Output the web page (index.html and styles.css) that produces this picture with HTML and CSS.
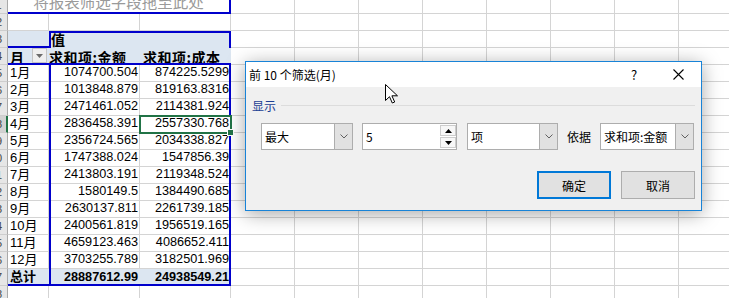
FILE: index.html
```html
<!DOCTYPE html>
<html lang="zh-CN">
<head>
  <meta charset="UTF-8" />
  <title>前 10 个筛选</title>
  <link rel="stylesheet" href="styles.css">
</head>
<body>
  <!-- ===== SHEET ===== -->
  <div class="sheet">
    <div class="row-heads">
      <div class="rh"><span>11</span></div>
      <div class="rh"><span>12</span></div>
      <div class="rh"><span>13</span></div>
      <div class="rh"><span>14</span></div>
      <div class="rh"><span>15</span></div>
      <div class="rh"><span>16</span></div>
      <div class="rh"><span>17</span></div>
      <div class="rh sel"><span>18</span></div>
      <div class="rh"><span>19</span></div>
      <div class="rh"><span>20</span></div>
      <div class="rh"><span>21</span></div>
      <div class="rh"><span>22</span></div>
      <div class="rh"><span>23</span></div>
      <div class="rh"><span>24</span></div>
      <div class="rh"><span>25</span></div>
      <div class="rh"><span>26</span></div>
      <div class="rh"><span>27</span></div>
      <div class="rh"><span>28</span></div>
    </div>

    <div class="pivot">
      <div class="pv-filter">将报表筛选字段拖至此处</div>
      <div class="pv-gap"></div>

      <div class="pv-corner"></div>
      <div class="pv-values">值</div>

      <div class="pv-rowfield"><span class="field-name">月</span><span class="filter-btn"><svg width="7" height="4" viewBox="0 0 7 4"><path d="M0 0h7L3.5 4z" fill="#6b6b6b"/></svg></span></div>
      <div class="pv-colhead b">求和项:金额</div>
      <div class="pv-colhead c">求和项:成本</div>

      <div class="lbl">1月</div><div class="num b">1074700.504</div><div class="num c">874225.5299</div>
      <div class="lbl">2月</div><div class="num b">1013848.879</div><div class="num c">819163.8316</div>
      <div class="lbl">3月</div><div class="num b">2471461.052</div><div class="num c">2114381.924</div>
      <div class="lbl">4月</div><div class="num b">2836458.391</div><div class="num c sel">2557330.768</div>
      <div class="lbl">5月</div><div class="num b">2356724.565</div><div class="num c">2034338.827</div>
      <div class="lbl">6月</div><div class="num b">1747388.024</div><div class="num c">1547856.39</div>
      <div class="lbl">7月</div><div class="num b">2413803.191</div><div class="num c">2119348.524</div>
      <div class="lbl">8月</div><div class="num b">1580149.5</div><div class="num c">1384490.685</div>
      <div class="lbl">9月</div><div class="num b">2630137.811</div><div class="num c">2261739.185</div>
      <div class="lbl">10月</div><div class="num b">2400561.819</div><div class="num c">1956519.165</div>
      <div class="lbl">11月</div><div class="num b">4659123.463</div><div class="num c">4086652.411</div>
      <div class="lbl">12月</div><div class="num b">3703255.789</div><div class="num c">3182501.969</div>
      <div class="lbl total">总计</div><div class="num b total">28887612.99</div><div class="num c total">24938549.21</div>
    </div>

    <div class="rest"></div>
  </div>

  <!-- ===== TOP 10 FILTER DIALOG ===== -->
  <div class="dialog">
    <div class="dlg-title">
      <span class="caption">前 10 个筛选(月)</span>
      <span class="help">?</span>
      <span class="close">
        <svg width="11" height="11" viewBox="0 0 11 11"><path d="M0.5 0.5l10 10M10.5 0.5l-10 10" stroke="#000" stroke-width="1.1"/></svg>
      </span>
    </div>

    <div class="dlg-body">
      <div class="group-head"><span>显示</span><i class="rule"></i></div>

      <div class="controls">
        <div class="combo mode">
          <span class="value">最大</span>
          <span class="drop"><svg width="8" height="5" viewBox="0 0 8 5"><path d="M0.5 0.5l3.5 3.5 3.5-3.5" fill="none" stroke="#606060"/></svg></span>
        </div>
        <div class="spin">
          <span class="value">5</span>
          <span class="spin-btns">
            <b><svg width="7" height="4" viewBox="0 0 7 4"><path d="M0 4h7L3.5 0z"/></svg></b>
            <b><svg width="7" height="4" viewBox="0 0 7 4"><path d="M0 0h7L3.5 4z"/></svg></b>
          </span>
        </div>
        <div class="combo unit">
          <span class="value">项</span>
          <span class="drop"><svg width="8" height="5" viewBox="0 0 8 5"><path d="M0.5 0.5l3.5 3.5 3.5-3.5" fill="none" stroke="#606060"/></svg></span>
        </div>
        <span class="by">依据</span>
        <div class="combo field">
          <span class="value">求和项:金额</span>
          <span class="drop"><svg width="8" height="5" viewBox="0 0 8 5"><path d="M0.5 0.5l3.5 3.5 3.5-3.5" fill="none" stroke="#606060"/></svg></span>
        </div>
      </div>

      <div class="actions">
        <button class="btn primary">确定</button>
        <button class="btn">取消</button>
      </div>
    </div>
  </div>

  <!-- mouse pointer over the dialog -->
  <svg class="cursor" width="13" height="20" viewBox="0 0 13 20">
    <path d="M0.5 0.5v16l4-3.8 2.8 6.3 2.4-1-2.8-6.2h5.6z" fill="#fff" stroke="#000" stroke-width="1"/>
  </svg>
</body>
</html>
```

FILE: styles.css
```css
/* === PALETTE === */
:root {
  --grid: #d4d4d4;
  --pivot-blue: #0000cc;
  --pivot-fill: #dce6f1;
  --select: #217346;
  --dlg-bg: #f0f0f0;
  --ctl-border: #adadad;
}

/* 1) Base */
body {
  margin: 0;
  background: #fff;
  color: #000;
  font-family: "Liberation Sans", "Noto Sans CJK SC", sans-serif;
  overflow: hidden;
}

/* 2) Sheet: row headers + pivot columns A-C + the rest */
.sheet {
  display: flex;
  margin-top: -3px;      /* first row is cut off at the top */
  height: 310px;
}

.row-heads {
  width: 8px;
  flex: none;
}
.rh {
  height: 17px;
  box-sizing: border-box;
  background: #e6e6e6;
  border-right: 1px solid #a9a9a9;
  border-bottom: 1px solid #cdcdcd;
  overflow: hidden;
  font-size: 11px;
  line-height: 16px;
  color: #444;
}
.rh span {
  display: block;
  width: 28px;
  margin-left: -18px;
  text-align: center;
}
.rh.sel {
  background: #d2d2d2;
  border-right: 2px solid var(--select);
}

.pivot {
  width: 223px;
  flex: none;
  display: grid;
  grid-template-columns: 41px 91px 91px;
  grid-auto-rows: 17px;
  align-content: start;
  background:
    repeating-linear-gradient(to bottom, transparent 0 16px, var(--grid) 16px 17px),
    linear-gradient(to right,
      transparent 0 40px, var(--grid) 40px 41px,
      transparent 41px 131px, var(--grid) 131px 132px,
      transparent 132px 222px, var(--grid) 222px 223px);
}
.rest {
  flex: 1;
  background:
    repeating-linear-gradient(to bottom, transparent 0 16px, var(--grid) 16px 17px),
    repeating-linear-gradient(to right, transparent 0 63px, var(--grid) 63px 64px);
}

.pivot > div {
  box-sizing: border-box;
  overflow: hidden;
  white-space: nowrap;
}

/* 3) Pivot table cells */
.pv-filter {
  grid-column: span 3;
  background: #fff;
  border-bottom: 2px solid var(--pivot-blue);
  border-right: 2px solid var(--pivot-blue);
  text-align: center;
  font-family: "Noto Sans CJK SC", sans-serif;
  font-size: 15.5px;
  line-height: 8px;
  color: #9a9a9a;
  overflow: visible !important;
}
.pv-gap {
  grid-column: span 3;
}
.pv-corner {
  background: var(--pivot-fill);
  border-bottom: 2px solid var(--pivot-blue);
}
.pv-values {
  grid-column: span 2;
  background: var(--pivot-fill);
  border: 2px solid var(--pivot-blue);
  border-bottom: none;
  font-family: "Noto Sans CJK SC", sans-serif;
  font-weight: 700;
  font-size: 14px;
  line-height: 13px;
}
.pv-rowfield {
  display: flex;
  justify-content: space-between;
  background: var(--pivot-fill);
  border-bottom: 2px solid var(--pivot-blue);
  padding-left: 2px;
  font-family: "Noto Sans CJK SC", sans-serif;
  font-weight: 700;
  font-size: 14px;
}
.pv-rowfield .field-name {
  padding-top: 1px;
  line-height: 17px;
}
.filter-btn {
  width: 15px;
  margin-right: 2px;
  box-sizing: border-box;
  background: #efefef;
  border: 1px solid #c4c4c4;
  display: flex;
  align-items: center;
  justify-content: center;
}
.pv-colhead {
  background: var(--pivot-fill);
  border-bottom: 2px solid var(--pivot-blue);
  padding-top: 1px;
  font-family: "Noto Sans CJK SC", sans-serif;
  font-weight: 700;
  font-size: 14px;
  line-height: 17px;
  letter-spacing: 0.5px;
}
.pv-colhead.c {
  padding-left: 3px;
}

.lbl {
  padding-left: 2px;
  font-size: 13px;
  line-height: 15px;
}
.num {
  text-align: right;
  font-size: 12.7px;
  line-height: 15px;
}
.num.b {
  border-left: 2px solid var(--pivot-blue);
  padding-right: 2px;
}
.num.c {
  border-right: 2px solid var(--pivot-blue);
}

/* selected cell with fill handle */
.num.c.sel {
  position: relative;
  overflow: visible !important;
  border-right: none;
  padding-right: 2px;
  box-shadow: 0 0 0 1px var(--select), inset 0 0 0 1px var(--select);
}
.num.c.sel::after {
  content: "";
  position: absolute;
  right: -3px;
  bottom: -3px;
  width: 5px;
  height: 5px;
  background: var(--select);
  border: 1px solid #fff;
}

.total {
  background: var(--pivot-fill);
  border-bottom: 2px solid var(--pivot-blue);
  font-weight: 700;
  line-height: 16px;
}

/* 4) Dialog */
.dialog {
  position: absolute;
  left: 245px;
  top: 61px;
  width: 457px;
  box-sizing: border-box;
  border: 1px solid #1883d7;
  background: var(--dlg-bg);
  box-shadow: 0 3px 18px rgba(0, 0, 0, 0.35);
  font-family: "Noto Sans CJK SC", sans-serif;
  font-size: 12px;
  color: #000;
}
.dlg-title {
  height: 25px;
  background: #fff;
  display: flex;
  align-items: center;
  padding-left: 3px;
}
.dlg-title .caption {
  flex: 1;
}
.dlg-title .help {
  width: 30px;
  margin-right: 6px;
  text-align: center;
  font-size: 13px;
}
.dlg-title .close {
  width: 46px;
  display: flex;
  justify-content: center;
}

.dlg-body {
  padding: 10px 6px 11px;
}
.group-head {
  display: flex;
  align-items: center;
  height: 16px;
  color: #1c3f94;
}
.group-head .rule {
  flex: 1;
  height: 1px;
  margin-left: 5px;
  background: #dcdcdc;
}

.controls {
  display: flex;
  align-items: center;
  gap: 9px;
  margin-top: 10px;
  padding-left: 9px;
}
.combo,
.spin {
  height: 27px;
  box-sizing: border-box;
  border: 1px solid var(--ctl-border);
  background: #fff;
  display: flex;
}
.combo .value,
.spin .value {
  flex: 1;
  padding-left: 3px;
  line-height: 25px;
  white-space: nowrap;
}
.combo .drop {
  width: 17px;
  background: #e1e1e1;
  border-left: 1px solid var(--ctl-border);
  display: flex;
  align-items: center;
  justify-content: center;
}
.combo.mode  { width: 92px; }
.combo.unit  { width: 91px; }
.combo.field { width: 94px; }
.spin {
  width: 95px;
  margin-right: 1px;
}
.spin-btns {
  width: 16px;
  padding: 1px 0;
  display: flex;
  flex-direction: column;
  gap: 1px;
}
.spin-btns b {
  flex: 1;
  box-sizing: border-box;
  border: 1px solid #cdcdcd;
  background: #f7f7f7;
  display: flex;
  align-items: center;
  justify-content: center;
}
.by {
  width: 24px;
}

.actions {
  display: flex;
  justify-content: flex-end;
  gap: 10px;
  margin-top: 21px;
}
.btn {
  width: 74px;
  height: 28px;
  box-sizing: border-box;
  border: 1px solid var(--ctl-border);
  background: #e1e1e1;
  font: inherit;
  color: #000;
  padding: 0;
}
.btn.primary {
  border: 2px solid #0078d7;
}

/* 5) Mouse pointer */
.cursor {
  position: absolute;
  left: 385px;
  top: 84px;
}
```
